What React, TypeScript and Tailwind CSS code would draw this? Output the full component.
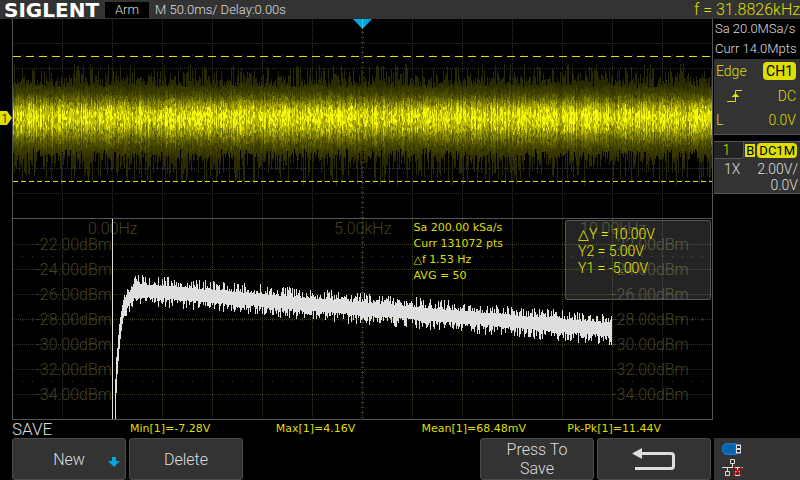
import clsx from "clsx";
import type { ReactNode } from "react";

type TraceLevel = { color: string; d: string };

const measurements = ["Min[1]=-7.28V", "Max[1]=4.16V", "Mean[1]=68.48mV", "Pk-Pk[1]=11.44V"];
const dbLabels = ["-22.00dBm", "-24.00dBm", "-26.00dBm", "-28.00dBm", "-30.00dBm", "-32.00dBm", "-34.00dBm"];
const columns = Array.from({ length: 13 }, (_, i) => 62 + i * 50);
const topRows = [24, 49, 74, 99, 124, 149, 174];
const bottomRows = [225, 250, 275, 300, 325, 350, 375];

// seeded so that the noise is the same on every render
function createRandom(seed: number) {
  let s = seed;
  return () => {
    s = (s * 1664525 + 1013904223) % 4294967296;
    return s / 4294967296;
  };
}

const traceColors = ["#2a2a00", "#383800", "#4c4c00", "#646400", "#808000", "#9c9c00", "#b8b800", "#d6d600", "#f8f80a"];

function buildTrace(): TraceLevel[] {
  const rand = createRandom(11);
  const paths = traceColors.map(() => "");
  for (let x = 13; x < 712; x++) {
    const top = 67 - Math.pow(rand(), 2.2) * 20 - rand() * 7;
    const bottom = 128 + Math.pow(rand(), 1.8) * 32 + rand() * 7;
    const gain = 0.76 + rand() * 0.4;
    for (let y = 45 + Math.floor(rand() * 3); y < 168; y += 3) {
      if (y < top || y > bottom) continue;
      const dist = y < 96 ? (96 - y) / 17 : (y - 96) / 23;
      const value = Math.exp(-Math.pow(dist, 1.7) * 0.8) * gain * (0.68 + rand() * 0.5);
      const level = Math.max(0, Math.min(8, Math.floor(value * 8.8)));
      paths[level] += `M${x} ${y}h1v3h-1z`;
    }
  }
  return paths.map((d, i) => ({ color: traceColors[i], d }));
}

// top and bottom of the steep edge, one pair per column from x = 115
const edge = [[360, 400], [338, 374], [329, 355], [316, 342], [305, 330], [298, 320], [292, 312], [286, 305], [281, 299], [276, 297]];

function buildSpectrum() {
  const rand = createRandom(5);
  let d = edge.map(([top, bottom], i) => `M${115 + i} ${top}h1V${bottom}h-1z`).join("");
  for (let x = 125; x < 612; x++) {
    const rise = x < 136 ? Math.pow((136 - x) / 11, 1.5) * 13 : 0;
    const mid = 272 + rise + Math.max(0, x - 150) * 0.084;
    const up = 6 + Math.pow(rand(), 1.7) * 10;
    const down = 6 + Math.pow(rand(), 1.7) * 10;
    d += `M${x} ${Math.round(mid - up)}h1v${Math.round(up + down)}h-1z`;
  }
  return d;
}

const trace = buildTrace();
const spectrum = buildSpectrum();

function Graticule() {
  return (
    <g strokeWidth="1" fill="none" shapeRendering="crispEdges">
      <g stroke="#303030" strokeDasharray="1 1">
        {columns.map((x) => (
          <path key={x} d={`M${x + 0.5} 0V400`} />
        ))}
        {topRows.map((y) => (
          <path key={y} d={`M14 ${y + 0.5}H712`} />
        ))}
        {bottomRows.map((y) => (
          <path key={y} d={`M14 ${y + 0.5}H112M613 ${y + 0.5}H712`} />
        ))}
      </g>
      <g stroke="#3c3c18" strokeDasharray="1 1">
        {columns.slice(1, 12).map((x) => (
          <path key={x} d={`M${x + 0.5} 200V400`} />
        ))}
        {bottomRows.map((y) => (
          <path key={y} d={`M112 ${y + 0.5}H613`} />
        ))}
      </g>
      <g stroke="#3c3c2c">
        <path d="M22 36.5H712M22 161.5H712M22 237.5H712M22 362.5H712" strokeDasharray="1 9" />
        <path d="M22 300.5H712" strokeWidth="3" strokeDasharray="1 9" />
        <path d="M362.5 3V400" strokeWidth="3" strokeDasharray="1 4" />
      </g>
    </g>
  );
}

function Plot() {
  return (
    <svg viewBox="0 0 713 401" className="block h-auto w-full" role="img" aria-label="Channel 1 trace and spectrum">
      <Graticule />
      <g className="font-['Roboto'] text-[16px] font-light" fill="#434320">
        <text x="88" y="215">0.00Hz</text>
        <text x="334" y="215">5.00kHz</text>
        <text x="580" y="215">10.00kHz</text>
        {dbLabels.map((label, i) => (
          <g key={label}>
            <text x="112" y={231 + i * 25} textAnchor="end">{label}</text>
            <text x="612" y={231 + i * 25}>{label}</text>
          </g>
        ))}
      </g>
      <g shapeRendering="crispEdges">
        {trace.map((level) => (
          <path key={level.color} d={level.d} fill={level.color} />
        ))}
        <path d={spectrum} fill="#dedede" />
        <path d="M112 200h1v200h-1z" fill="#dedede" />
        <path d="M13 37.5H712" stroke="#dede00" strokeDasharray="8 5" />
        <path d="M13 162.5H712" stroke="#dede00" strokeDasharray="5 3" />
        <path d="M12.5 0V400.5H712.5V0M12 199.5H712" stroke="#555" fill="none" />
      </g>
      <path d="M353 0h19l-9.500 10z" fill="#00a8e0" />
      <path d="M362.5 0v9" stroke="#40c8f4" />
      <path d="M712 93v12l-8-6z" fill="#dede00" />
      <path d="M0 92h7l5 7-5 7H0z" fill="#dede00" />
      <text x="1" y="104" className="font-['Roboto'] text-[13px]" fill="#000">1</text>
    </svg>
  );
}

function SoftKey({ children, className }: { children: ReactNode; className?: string }) {
  return (
    <button
      type="button"
      className={clsx(
        "relative flex h-[42px] items-center justify-center rounded-[3px] border border-[#4c4c4c] bg-[#333] text-center text-[16px] leading-[19px]",
        className,
      )}
    >
      {children}
    </button>
  );
}

function TriggerPanel() {
  return (
    <section className="flex h-[76px] flex-col justify-between border-b border-[#555] bg-[#333] pt-[3px] pr-[4px] pb-[5px] pl-[2px] text-[14px] leading-[18px] text-[#dede00]">
      <div className="flex items-center justify-between">
        <span>Edge</span>
        <span className="rounded-[4px] bg-[#dede00] px-[3px] font-normal text-black">CH1</span>
      </div>
      <div className="flex items-center justify-between">
        <svg width="16" height="14" viewBox="0 0 16 14" className="ml-[11px]" fill="none" stroke="currentColor" aria-hidden="true">
          <path d="M0 12.500H8.500V1.500H15" />
          <path d="M4.500 8L8.500 4L12.500 8z" fill="currentColor" stroke="none" />
        </svg>
        <span>DC</span>
      </div>
      <div className="flex items-center justify-between">
        <span>L</span>
        <span>0.0V</span>
      </div>
    </section>
  );
}

function ChannelPanel() {
  return (
    <section className="mt-[6px] border-y border-[#555] bg-[#333] text-[14px] leading-[16px]">
      <div className="flex items-center justify-between pr-[3px] text-black">
        <span className="w-[30px] rounded-br-[4px] border-r border-b border-[#555] bg-[#222] pr-[4px] text-center text-[#dede00]">1</span>
        <span className="flex items-center gap-[2px] font-normal">
          <span className="bg-[#dede00] px-[1px] text-[13px] leading-[13px]">B</span>
          <span className="rounded-[4px] bg-[#dede00] px-[2px] text-[13px] leading-[15px]">DC1M</span>
        </span>
      </div>
      <div className="flex justify-between pt-[2px] pr-[2px] pl-[10px]">
        <span>1X</span>
        <span>2.00V/</span>
      </div>
      <div className="pr-[2px] text-right">0.0V</div>
    </section>
  );
}

function StatusIcons() {
  return (
    <div className="mt-auto flex h-[42px] flex-col gap-[4px] bg-[#333] pt-[5px] pl-[8px]">
      <svg width="20" height="12" viewBox="0 0 20 12" aria-label="USB drive">
        <path d="M14 .7H4Q.7 2 .7 6T4 11.300H14z" fill="#0a62a8" stroke="#0b78e0" strokeWidth="1.400" />
        <path d="M14 1.500h5v9h-5z" fill="#ddd" />
        <path d="M15 3h3v2h-3zM15 7h3v2h-3z" fill="#222" />
      </svg>
      <svg width="21" height="18" viewBox="0 0 21 18" fill="none" aria-label="Network disconnected">
        <path d="M8.500 .5h4v4h-4zM10.500 4.500v4M0 8.500h21M5.500 8.500v4M3.500 12.500h4v4h-4zM15.500 8.500v4M13.500 12.500h4v4h-4z" stroke="#ddd" />
        <path d="M11 7.500L20 17M20 7.500L11 17" stroke="#d00000" strokeWidth="1.200" />
      </svg>
    </div>
  );
}

export default function App() {
  return (
    <div className="flex min-h-screen flex-col bg-black font-['Roboto',sans-serif] font-light text-[#dedede]">
      <header className="flex h-[19px] items-center bg-[#333] text-[13px] leading-[16px]">
        <h1 className="w-[105px] pt-[2px] pl-[4px] font-['DejaVu_Sans'] text-[20px] leading-[19px] font-bold text-white">SIGLENT</h1>
        <span className="w-[44px] bg-black text-center">Arm</span>
        <span className="ml-[6px]">M 50.0ms/ Delay:0.00s</span>
        <span className="ml-auto text-[16px] text-[#dede00]">f = 31.8826kHz</span>
      </header>

      <div className="flex flex-1">
        <main className="flex min-w-0 flex-1 flex-col">
          <div className="relative">
            <Plot />
            <div className="absolute top-1/2 left-[58%] font-['DejaVu_Sans'] text-[11px] leading-[16px] font-normal text-[#dede00]">
              <p>Sa 200.00 kSa/s</p>
              <p>Curr 131072 pts</p>
              <p>△f 1.53 Hz</p>
              <p>AVG = 50</p>
            </div>
            <div className="absolute top-1/2 right-[2px] h-[80px] w-[146px] rounded-[2px] border border-[#555] bg-white/14 px-[12px] py-[5px] text-[14px] leading-[17px] text-[#eaea00]">
              <p>△Y = 10.00V</p>
              <p>Y2 = 5.00V</p>
              <p>Y1 = -5.00V</p>
            </div>
          </div>

          <div className="mt-auto flex h-[18px] items-center pl-[12px]">
            <h2 className="w-[118px] text-[17px] leading-[18px]">SAVE</h2>
            <ul className="grid flex-1 grid-cols-4 font-['DejaVu_Sans'] text-[11px] font-normal text-[#dede00]">
              {measurements.map((m) => (
                <li key={m}>{m}</li>
              ))}
            </ul>
          </div>

          <nav className="grid grid-cols-6 gap-[3px] pr-[2px] pl-[12px]">
            <SoftKey>
              New
              <svg width="12" height="10" viewBox="0 0 12 10" className="absolute right-[5px] bottom-[12px]" aria-hidden="true">
                <path d="M4 0h4v4h4l-6 6-6-6h4z" fill="#00a8e0" />
              </svg>
            </SoftKey>
            <SoftKey>Delete</SoftKey>
            <SoftKey className="col-start-5 px-[20px]">Press To Save</SoftKey>
            <SoftKey>
              <svg width="44" height="24" viewBox="0 0 44 24" fill="none" aria-label="Back">
                <path d="M8 6.500H39Q41.500 6.500 41.500 9V19Q41.500 21.500 39 21.500H3" stroke="#dedede" strokeWidth="3" />
                <path d="M0 6.500L10 1V12z" fill="#dedede" />
              </svg>
            </SoftKey>
          </nav>
        </main>

        <aside className="flex w-[87px] shrink-0 flex-col pl-px">
          <div className="h-[40px] pl-px text-[13px] leading-[20px] whitespace-nowrap">
            <p>Sa 20.0MSa/s</p>
            <p>Curr 14.0Mpts</p>
          </div>
          <TriggerPanel />
          <ChannelPanel />
          <StatusIcons />
        </aside>
      </div>
    </div>
  );
}
